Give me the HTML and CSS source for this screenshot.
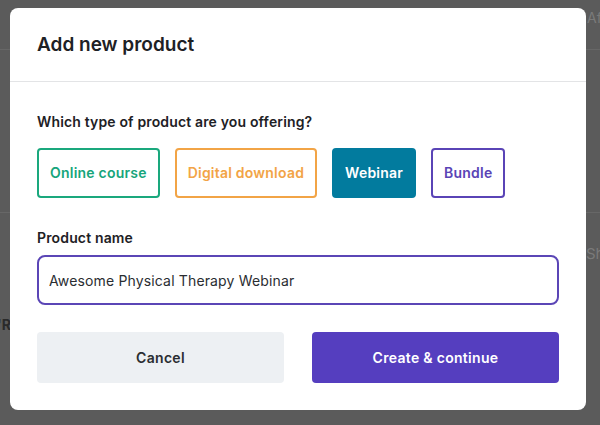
FILE: index.html
```html
<!DOCTYPE html>
<html lang="en">
<head>
<meta charset="utf-8">
<title>Add new product</title>
<link rel="stylesheet" href="styles.css">
</head>
<body>
<div class="page">
  <div class="page-row page-top"><span class="ghost">Affiliates</span></div>
  <div class="page-row page-mid"></div>
  <div class="page-row page-low">
    <span class="ghost ghost-sh">Share</span>
    <span class="ghost-r">'R</span>
  </div>
</div>

<div class="overlay">
  <div class="modal">
    <div class="modal-header">
      <h2 class="modal-title">Add new product</h2>
    </div>
    <div class="modal-body">
      <div class="field-label">Which type of product are you offering?</div>
      <div class="type-list">
        <button class="type type-green">Online course</button>
        <button class="type type-orange">Digital download</button>
        <button class="type type-teal">Webinar</button>
        <button class="type type-purple">Bundle</button>
      </div>
      <label class="field-label name-label" for="pname">Product name</label>
      <input id="pname" class="name-input" type="text" value="Awesome Physical Therapy Webinar">
      <div class="actions">
        <button class="btn btn-cancel">Cancel</button>
        <button class="btn btn-create">Create &amp; continue</button>
      </div>
    </div>
  </div>
</div>
</body>
</html>
```

FILE: styles.css
```css
* { box-sizing: border-box; }

html, body {
  margin: 0;
  padding: 0;
  width: 600px;
  height: 425px;
  overflow: hidden;
  background: #5b5b5b;
  font-family: Inter, "Liberation Sans", sans-serif;
}

.page {
  width: 600px;
  height: 425px;
  display: flex;
  flex-direction: column;
}

.page-row { border-bottom: 1px solid #676767; }

.page-top {
  height: 50px;
  padding: 7px 0 0 587px;
  white-space: nowrap;
  overflow: hidden;
}

.page-mid { height: 163px; }

.page-low {
  border-bottom: none;
  flex: 1;
  display: flex;
  flex-direction: column;
  padding-top: 32px;
}

.ghost {
  color: #7a7a7a;
  font-size: 14px;
  line-height: 18px;
}

.ghost-sh {
  padding-left: 586px;
  white-space: nowrap;
  overflow: hidden;
  font-size: 15px;
}

.ghost-r {
  margin-top: 53px;
  margin-left: -3px;
  color: #2a2a2a;
  font-weight: 700;
  font-size: 14px;
  line-height: 18px;
}

.overlay {
  position: absolute;
  left: 0;
  top: 0;
  width: 600px;
  height: 425px;
  padding: 8px 14px 15px 10px;
}

.modal {
  width: 576px;
  height: 402px;
  background: #ffffff;
  border-radius: 8px;
  display: flex;
  flex-direction: column;
}

.modal-header {
  height: 74px;
  border-bottom: 1px solid #e3e4e6;
  padding: 0 27px;
  display: flex;
  align-items: center;
}

.modal-title {
  margin: 0;
  font-size: 19px;
  line-height: 24px;
  font-weight: 600;
  color: #1e2125;
}

.modal-body {
  padding: 30px 27px 26px;
  display: flex;
  flex-direction: column;
}

.field-label {
  display: block;
  font-size: 14px;
  line-height: 20px;
  font-weight: 600;
  letter-spacing: 0.15px;
  color: #1e2125;
}

.type-list {
  display: flex;
  gap: 15px;
  margin-top: 16px;
}

.type {
  font-family: inherit;
  font-size: 14px;
  line-height: 20px;
  font-weight: 600;
  letter-spacing: 0.22px;
  padding: 13px 11px;
  border: 2px solid;
  border-radius: 4px;
  background: #ffffff;
}

.type-green { color: #16a57b; border-color: #1aa87d; }
.type-orange { color: #f2a446; border-color: #f2a446; }
.type-teal { color: #ffffff; background: #027b9e; border-color: #027b9e; }
.type-purple { color: #5a44b6; border-color: #5a44b6; }

.name-label { margin-top: 30px; }

.name-input {
  margin-top: 7px;
  height: 50px;
  width: 100%;
  border: 2px solid #5b46b6;
  border-radius: 8px;
  padding: 0 10px;
  font-family: inherit;
  font-size: 14px;
  letter-spacing: 0.15px;
  color: #2a2d31;
  outline: none;
}

.actions {
  margin-top: 27px;
  display: grid;
  grid-template-columns: 1fr 1fr;
  gap: 28px;
}

.btn {
  height: 51px;
  border: none;
  border-radius: 4px;
  font-family: inherit;
  font-size: 14px;
  font-weight: 600;
  letter-spacing: 0.3px;
}

.btn-cancel { background: #edf0f3; color: #2a2d31; }
.btn-create { background: #553ebf; color: #ffffff; }
```
